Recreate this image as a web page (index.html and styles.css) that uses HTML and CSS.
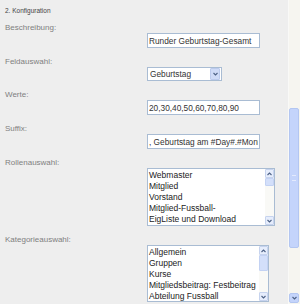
FILE: index.html
```html
<!DOCTYPE html>
<html lang="de">
<head>
    <meta charset="UTF-8">
    <title>Konfiguration</title>
    <link rel="stylesheet" href="styles.css">
</head>
<body>
    <div class="page">
        <div class="content">
            <div class="group-title">2. Konfiguration</div>

            <div class="field">
                <label>Beschreibung:</label>
                <div class="control"><input class="text-input" type="text" value="Runder Geburtstag-Gesamt"></div>
            </div>

            <div class="field">
                <label>Feldauswahl:</label>
                <div class="control">
                    <div class="select">
                        <span class="select-value">Geburtstag</span>
                        <span class="select-btn">
                            <svg width="5" height="4" viewBox="0 0 5 4"><polyline points="0.5,1 2.5,3 4.5,1" fill="none" stroke="#4d6185" stroke-width="1.1"/></svg>
                        </span>
                    </div>
                </div>
            </div>

            <div class="field">
                <label>Werte:</label>
                <div class="control"><input class="text-input" type="text" value="20,30,40,50,60,70,80,90"></div>
            </div>

            <div class="field">
                <label>Suffix:</label>
                <div class="control"><input class="text-input" type="text" value=", Geburtstag am #Day#.#Month#.#Year#"></div>
            </div>

            <div class="field">
                <label>Rollenauswahl:</label>
                <div class="control">
                    <div class="listbox roles">
                        <div class="items">
                            <div>Webmaster</div>
                            <div>Mitglied</div>
                            <div>Vorstand</div>
                            <div>Mitglied-Fussball-</div>
                            <div>EigListe und Download</div>
                        </div>
                        <div class="mini-scroll">
                            <span class="mini-btn">
                                <svg width="5" height="4" viewBox="0 0 5 4"><polyline points="0.5,3 2.5,1 4.5,3" fill="none" stroke="#4d6185" stroke-width="1.1"/></svg>
                            </span>
                            <span class="mini-thumb small"></span>
                            <span class="mini-space"></span>
                            <span class="mini-btn">
                                <svg width="5" height="4" viewBox="0 0 5 4"><polyline points="0.5,1 2.5,3 4.5,1" fill="none" stroke="#4d6185" stroke-width="1.1"/></svg>
                            </span>
                        </div>
                    </div>
                </div>
            </div>

            <div class="field">
                <label>Kategorieauswahl:</label>
                <div class="control">
                    <div class="listbox categories">
                        <div class="items">
                            <div>Allgemein</div>
                            <div>Gruppen</div>
                            <div>Kurse</div>
                            <div>Mitgliedsbeitrag: Festbeitrag</div>
                            <div>Abteilung Fussball</div>
                        </div>
                        <div class="mini-scroll">
                            <span class="mini-btn">
                                <svg width="5" height="4" viewBox="0 0 5 4"><polyline points="0.5,3 2.5,1 4.5,3" fill="none" stroke="#4d6185" stroke-width="1.1"/></svg>
                            </span>
                            <span class="mini-thumb large"></span>
                            <span class="mini-space"></span>
                            <span class="mini-btn">
                                <svg width="5" height="4" viewBox="0 0 5 4"><polyline points="0.5,1 2.5,3 4.5,1" fill="none" stroke="#4d6185" stroke-width="1.1"/></svg>
                            </span>
                        </div>
                    </div>
                </div>
            </div>
        </div>

        <div class="vscroll">
            <div class="track-top"></div>
            <div class="thumb"><span class="grip"></span></div>
            <div class="track-bottom"></div>
            <div class="arrow">
                <svg width="5" height="4" viewBox="0 0 5 4"><polyline points="0.5,1 2.5,3 4.5,1" fill="none" stroke="#4d6185" stroke-width="1.1"/></svg>
            </div>
        </div>
    </div>
</body>
</html>
```

FILE: styles.css
```css
body {
    margin: 0;
    background-color: #eeeeee;
    font-family: "Liberation Sans", Arial, sans-serif;
}
.page {
    display: flex;
    height: 304px;
    overflow: hidden;
}
.content {
    flex: 1;
    padding: 7px 0 0 5px;
}
.group-title {
    font-size: 6.5px;
    line-height: 8px;
    color: #444;
    margin-bottom: 8px;
}
.field {
    display: grid;
    grid-template-columns: 142px auto;
    margin-bottom: 9px;
}
.field label {
    font-size: 8px;
    line-height: 10px;
    color: #808080;
}
.control {
    margin-top: 10px;
}
.text-input {
    display: block;
    width: 113px;
    height: 15px;
    box-sizing: border-box;
    margin: 0;
    padding: 0 1px;
    border: 1px solid #a9bcd3;
    border-radius: 0;
    background-color: white;
    font-family: "Liberation Sans", Arial, sans-serif;
    font-size: 8.3px;
    color: #333;
    outline: none;
}
.select {
    display: flex;
    align-items: center;
    width: 75px;
    height: 14px;
    box-sizing: border-box;
    border: 1px solid #a9bcd3;
    background-color: white;
    font-size: 8.3px;
    color: #333;
}
.select-value {
    flex: 1;
    padding-left: 2px;
}
.select-btn {
    display: flex;
    align-items: center;
    justify-content: center;
    width: 8px;
    height: 10px;
    margin-right: 1px;
    background-color: #cfdbf7;
    border: 1px solid #bccbed;
    border-radius: 1px;
}
.listbox {
    display: flex;
    height: 58px;
    box-sizing: border-box;
    border: 1px solid #a9bcd3;
    background-color: white;
}
.listbox.roles {
    width: 128px;
}
.listbox.categories {
    width: 122px;
    height: 57px;
}
.items {
    flex: 1;
    padding: 1px 0 0 1px;
    font-size: 8.5px;
    line-height: 11px;
    color: #222;
    white-space: nowrap;
    overflow: hidden;
}
.mini-scroll {
    display: flex;
    flex-direction: column;
    width: 9px;
    background-color: #f9f9f6;
}
.mini-btn {
    display: flex;
    align-items: center;
    justify-content: center;
    height: 9px;
    box-sizing: border-box;
    border: 1px solid #c6d3ee;
    background-color: #e6edfc;
    border-radius: 1px;
}
.mini-thumb {
    box-sizing: border-box;
    border: 1px solid #c3d2f3;
    background-color: #d3dffa;
    border-radius: 1px;
}
.mini-thumb.small {
    height: 8px;
}
.mini-thumb.large {
    height: 16px;
}
.mini-space {
    flex: 1;
}
.vscroll {
    display: flex;
    flex-direction: column;
    width: 11px;
    background-color: #f6f5f0;
    border-left: 1px solid #f9f9f7;
}
.track-top {
    height: 108px;
}
.thumb {
    display: flex;
    align-items: center;
    justify-content: center;
    height: 140px;
    margin-right: 1px;
    box-sizing: border-box;
    border: 1px solid #b3c6f1;
    border-radius: 2px;
    background-color: #c4d4fb;
}
.grip {
    width: 4px;
    height: 4px;
    border-top: 1px solid #e3eafd;
    border-bottom: 1px solid #e3eafd;
}
.track-bottom {
    flex: 1;
}
.arrow {
    display: flex;
    align-items: center;
    justify-content: center;
    height: 10px;
    margin: 0 1px 1px 0;
    box-sizing: border-box;
    border: 1px solid #b3c6f1;
    border-radius: 2px;
    background-color: #c4d4fb;
}
```
